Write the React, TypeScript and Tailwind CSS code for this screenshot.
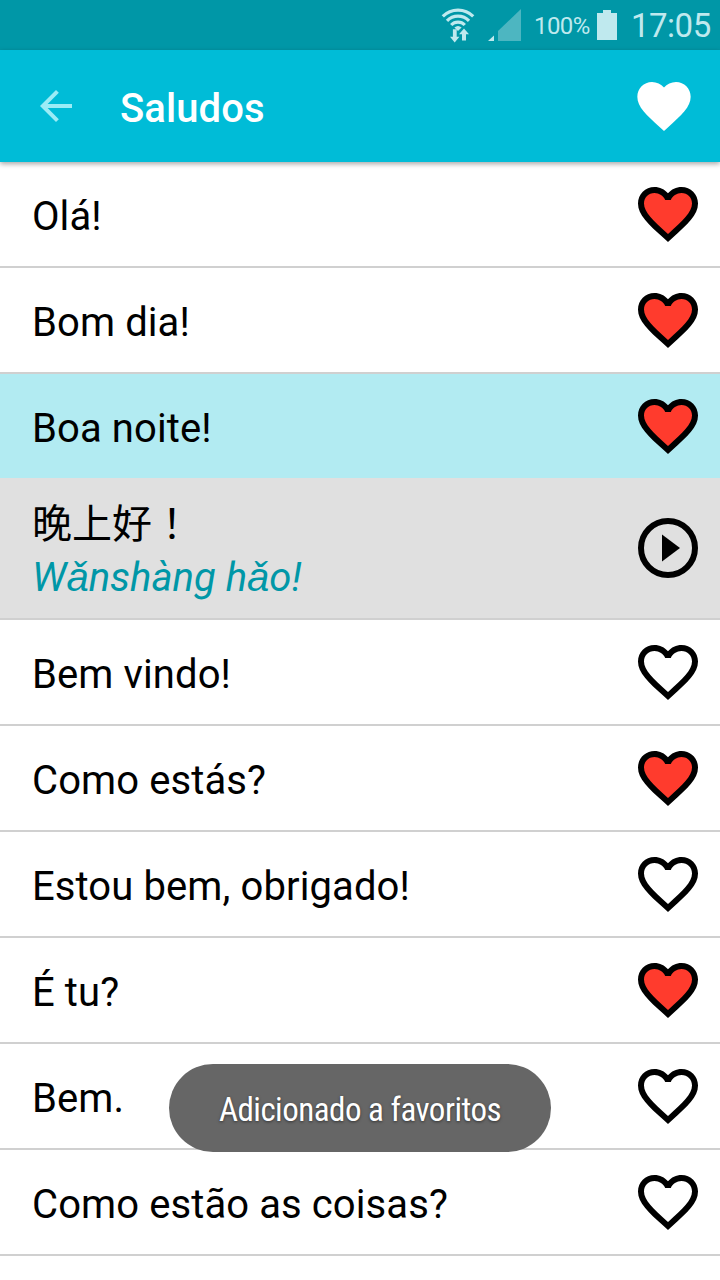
type Phrase = {
  text: string;
  favorite: boolean;
  translation?: { chinese: string; pinyin: string };
};

const phrases: Phrase[] = [
  { text: "Olá!", favorite: true },
  { text: "Bom dia!", favorite: true },
  {
    text: "Boa noite!",
    favorite: true,
    translation: { chinese: "晚上好！", pinyin: "Wǎnshàng hǎo!" },
  },
  { text: "Bem vindo!", favorite: false },
  { text: "Como estás?", favorite: true },
  { text: "Estou bem, obrigado!", favorite: false },
  { text: "É tu?", favorite: true },
  { text: "Bem.", favorite: false },
  { text: "Como estão as coisas?", favorite: false },
];

const heartShape =
  "M12 21.35l-1.45-1.32C5.4 15.36 2 12.28 2 8.5 2 5.42 4.42 3 7.5 3c1.74 0 3.41.81 4.5 2.09C13.09 3.81 14.76 3 16.5 3 19.58 3 22 5.42 22 8.5c0 3.78-3.4 6.86-8.55 11.54L12 21.35z";

const heartBorder =
  "M16.5 3c-1.74 0-3.41.81-4.5 2.09C10.91 3.81 9.24 3 7.5 3 4.42 3 2 5.42 2 8.5c0 3.78 3.4 6.86 8.55 11.54L12 21.35l1.45-1.32C18.6 15.36 22 12.28 22 8.5 22 5.42 19.58 3 16.5 3zm-4.4 15.55l-.1.1-.1-.1C7.14 14.24 4 11.39 4 8.5 4 6.5 5.5 5 7.5 5c1.54 0 3.04.99 3.57 2.36h1.87C13.46 5.99 14.96 5 16.5 5c2 0 3.5 1.5 3.5 3.5 0 2.89-3.14 5.74-7.9 10.05z";

function RowHeart({ filled }: { filled: boolean }) {
  return (
    <svg viewBox="0 0 24 24" className="size-[72px] shrink-0">
      {filled && (
        <path
          fill="#ff3b2d"
          d="M12 19.5C7 15 3.2 12 3.2 8.5 3.2 6 5 4.2 7.5 4.2c1.8 0 3.6 1 4.5 2.6.9-1.6 2.7-2.6 4.5-2.6 2.5 0 4.3 1.8 4.3 4.3 0 3.5-3.8 6.5-8.8 11z"
        />
      )}
      <path fill="#000" d={heartBorder} />
    </svg>
  );
}

function PlayIcon() {
  return (
    <svg viewBox="0 0 24 24" className="size-[72px] shrink-0">
      <circle cx="12" cy="12" r="9" fill="none" stroke="#000" strokeWidth="2" />
      <path d="M10 16.5l6-4.5-6-4.5z" />
    </svg>
  );
}

function StatusBar() {
  return (
    <div className="flex h-[50px] shrink-0 items-center bg-[#0097a7] pl-[440px] text-[#bfe9ee]">
      <svg viewBox="0 0 36 50" className="h-[50px] w-9 shrink-0" fill="none" stroke="currentColor" strokeWidth="3.2">
        <path d="M2.8 16.4a21.5 21.5 0 0 1 30.4 0" />
        <path d="M7 20.8a15.3 15.3 0 0 1 22 0" />
        <path d="M11.2 25a9.4 9.4 0 0 1 13.6 0" />
        <path d="M14.4 27.6a5.5 5.5 0 0 1 7.2 0L18 31z" fill="currentColor" stroke="none" />
        <path d="M12.9 29.3h3.8v7.5h2.7l-4.7 5.7-4.7-5.7h2.9z" fill="currentColor" stroke="none" />
        <path d="M22 40.6h4v-6.3h3l-5-5.9-5 5.9h3z" fill="currentColor" stroke="none" />
      </svg>
      <svg viewBox="0 0 34 32" className="ml-3 h-8 w-[34px] shrink-0">
        <path d="M10 32V22L33 0v32z" fill="#4db6c1" />
        <path d="M0 32l6-5.5V32z" fill="currentColor" />
      </svg>
      <span className="ml-3 w-[58px] pt-0.5 text-[24px] leading-none font-normal tracking-[-0.6px] whitespace-nowrap">100%</span>
      <svg viewBox="0 0 20 30" className="ml-[5px] h-[30px] w-5 shrink-0" fill="currentColor">
        <path d="M0 3h6V0h8v3h6v27H0z" />
      </svg>
      <span className="ml-[14px] pt-px text-[33px] leading-none font-[375] tracking-[-0.5px] whitespace-nowrap">17:05</span>
    </div>
  );
}

function AppBar() {
  return (
    <header className="z-10 flex h-28 shrink-0 items-center bg-[#00bcd7] pr-6 pl-8 shadow-[0_2px_5px_rgba(0,0,0,0.35)]">
      <svg viewBox="0 0 24 24" className="size-12" fill="#9becf6">
        <path d="M20 11H7.83l5.59-5.59L12 4l-8 8 8 8 1.41-1.41L7.83 13H20z" />
      </svg>
      <h1 className="ml-10 flex-1 pt-1.5 text-[40px] leading-[48px] font-medium tracking-[0.1px] text-white">Saludos</h1>
      <svg viewBox="0 0 24 24" className="size-16" fill="#fff">
        <path d={heartShape} />
      </svg>
    </header>
  );
}

function PhraseRow({ phrase }: { phrase: Phrase }) {
  const { text, favorite, translation } = phrase;

  if (!translation) {
    return (
      <li className="flex h-[106px] items-center justify-between border-b-2 border-[#d0d0d0] pr-4 pl-8">
        <span className="pt-1.5 text-[40px] leading-[48px] tracking-[0.1px]">{text}</span>
        <RowHeart filled={favorite} />
      </li>
    );
  }

  return (
    <li>
      <div className="flex h-[104px] items-center justify-between bg-[#b2ebf2] pr-4 pl-8">
        <span className="pt-1.5 text-[40px] leading-[48px] tracking-[0.1px]">{text}</span>
        <RowHeart filled={favorite} />
      </div>
      <div className="flex h-[142px] items-center justify-between border-b-2 border-[#d0d0d0] bg-[#e0e0e0] pr-4 pl-8">
        <div className="flex flex-col gap-[3px] pt-[3px]">
          {/* the TC face centres the full-width punctuation */}
          <span lang="zh-Hant" className="font-['Noto_Sans_CJK_TC',sans-serif] text-[40px] leading-[53px]">
            {translation.chinese}
          </span>
          <span className="font-[Roboto,'Liberation_Sans',Inter,sans-serif] text-[40px] leading-[53px] text-[#0097a7] italic">
            {translation.pinyin}
          </span>
        </div>
        <PlayIcon />
      </div>
    </li>
  );
}

function Toast({ message }: { message: string }) {
  return (
    <div className="absolute top-[1064px] left-[169px] z-20 flex h-[88px] w-[382px] items-center justify-center rounded-full bg-[#666]">
      <span className="pt-1 font-['Roboto_Condensed',Roboto,sans-serif] text-[33px] leading-10 font-[375] tracking-[-0.5px] whitespace-nowrap text-white [font-stretch:75%] [text-shadow:0_1px_3px_rgba(0,0,0,0.5)]">
        {message}
      </span>
    </div>
  );
}

export default function App() {
  return (
    <div className="relative flex h-[1280px] w-[720px] flex-col overflow-hidden bg-white font-[Roboto,'Noto_Sans_CJK_SC',sans-serif] text-black">
      <StatusBar />
      <AppBar />
      <ul className="flex flex-col">
        {phrases.map((p) => (
          <PhraseRow key={p.text} phrase={p} />
        ))}
      </ul>
      <Toast message="Adicionado a favoritos" />
    </div>
  );
}
